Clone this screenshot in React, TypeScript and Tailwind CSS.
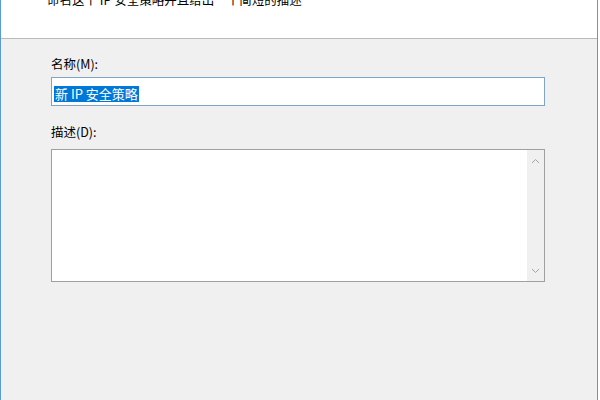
const cjk = { fontFamily: '"Noto Sans CJK SC", "Noto Sans", sans-serif' };

function Chevron({ up }: { up?: boolean }) {
  return (
    <svg width="9" height="6" viewBox="0 0 9 6" className="block">
      <path
        d={up ? "M1 5 L4.5 1.5 L8 5" : "M1 1 L4.5 4.5 L8 1"}
        fill="none"
        stroke="#a3a3a3"
        strokeWidth="1"
      />
    </svg>
  );
}

export default function App() {
  return (
    <div className="w-[600px] h-[400px] bg-white overflow-hidden" style={cjk}>
      <div className="w-[598px] h-full flex flex-col border-x border-[#5b9bd5]">
        {/* header strip, text cut by the top edge */}
        <div className="h-[39px] shrink-0 bg-white border-b border-[#b9b9b9] overflow-hidden">
          <p className="-mt-[9px] pl-[46px] text-[12.5px] leading-[18px] text-black whitespace-nowrap">
            命名这个 IP 安全策略并且给出一个简短的描述
          </p>
        </div>

        <div className="flex-1 bg-[#f0f0f0] pl-[50px] pt-[16px]">
          <label className="block text-[12.5px] leading-[18px] text-black">名称(M):</label>
          <div className="mt-[4px] w-[494px] h-[29px] bg-white border border-[#7fa4c6] pl-[2px] pt-[2px]">
            <span className="inline-block bg-[#0078d7] text-white text-[13px] leading-[16px] px-[1px] whitespace-pre">
              新 IP 安全策略
            </span>
          </div>

          <label className="block mt-[17px] text-[12.5px] leading-[18px] text-black">描述(D):</label>
          <div className="mt-[8px] w-[494px] h-[133px] bg-white border border-[#a0a0a0] flex">
            <div className="flex-1" />
            <div className="w-[17px] bg-[#f0f0f0] flex flex-col items-center justify-between pt-[8px] pb-[7px]">
              <Chevron up />
              <Chevron />
            </div>
          </div>
        </div>
      </div>
    </div>
  );
}
